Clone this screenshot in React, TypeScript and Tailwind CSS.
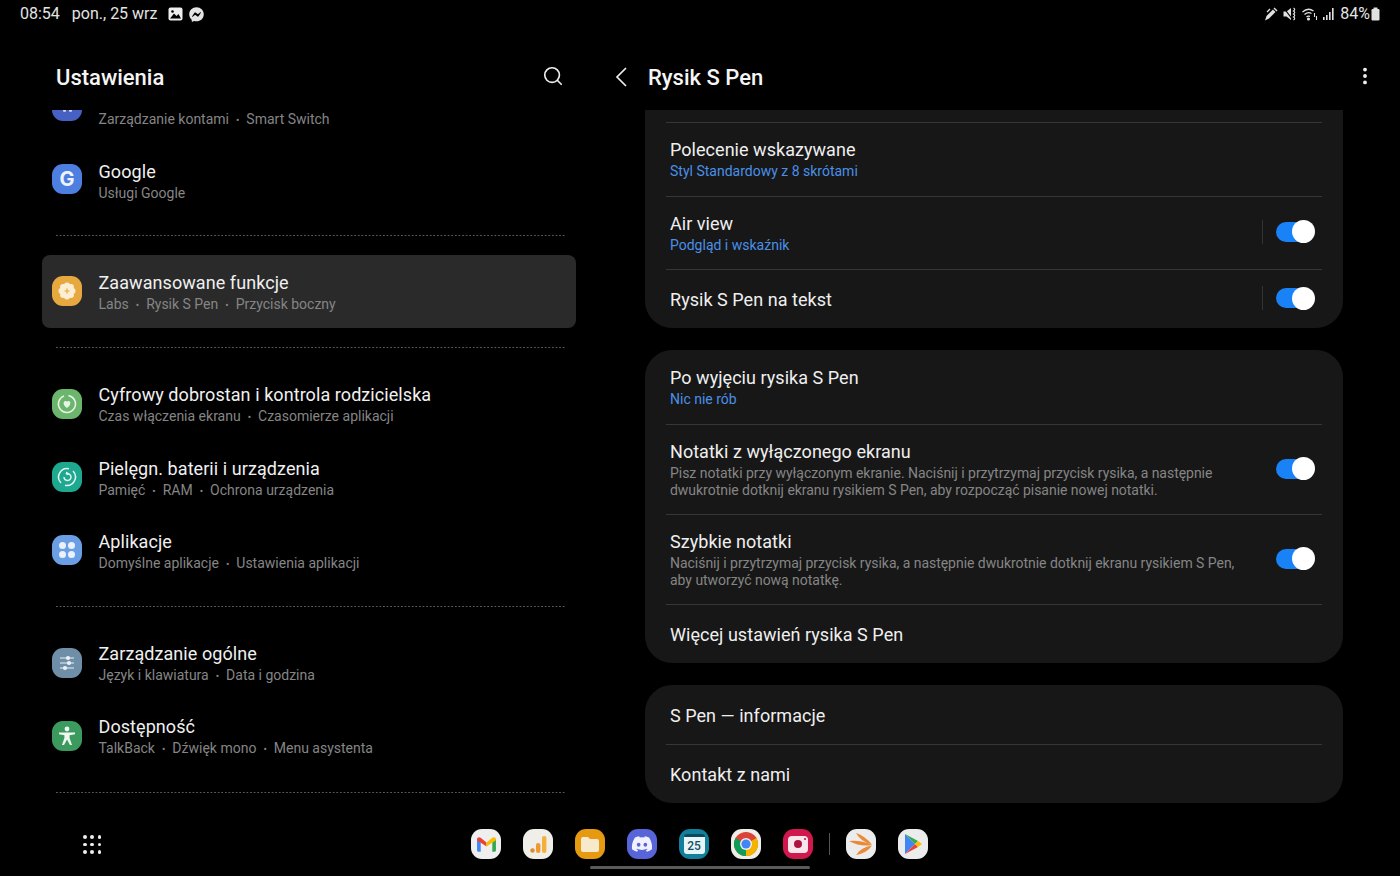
import { ReactNode } from 'react';
import { Search, MoreVertical } from 'lucide-react';
import { FaDiscord, FaFacebookMessenger } from 'react-icons/fa';

function Squircle({ className, children }: { className: string; children: ReactNode }) {
  return (
    <div className={`w-[30px] h-[30px] shrink-0 rounded-[11px] flex items-center justify-center overflow-hidden ${className}`}>
      {children}
    </div>
  );
}

function Sub({ parts, className = 'leading-[20px]' }: { parts: string[]; className?: string }) {
  return (
    <div className={`text-[14px] text-[#858585] whitespace-nowrap ${className}`}>
      {parts.map((p, i) => (
        <span key={p}>
          {i > 0 && <span className="mx-[7px] text-[10px]">•</span>}
          {p}
        </span>
      ))}
    </div>
  );
}

function MenuRow({ icon, title, parts, selected }: { icon: ReactNode; title: string; parts: string[]; selected?: boolean }) {
  return (
    <div className={`h-[73.3px] flex items-center gap-4 pl-[10px] rounded-[8px] ${selected ? 'bg-[#2a2a2a]' : ''}`}>
      {icon}
      <div className="flex flex-col pt-[5px] pl-[0.5px]">
        <div className="text-[18px] leading-[22px] tracking-[0.07px] text-[#f0f0f0] whitespace-nowrap">{title}</div>
        <Sub parts={parts} />
      </div>
    </div>
  );
}

function Dots() {
  return (
    <div className="ml-[14px] mr-[10px] my-[19px] h-px bg-[linear-gradient(to_right,#5a5a5a_1.5px,transparent_1.5px)] bg-[length:3.6px_1px]" />
  );
}

function Toggle({ sep }: { sep?: boolean }) {
  return (
    <div className="flex items-center shrink-0 pb-[2px]">
      {sep && <div className="w-px h-[24px] bg-[#333333] mr-[13px]" />}
      <div className="w-[38px] h-[20px] rounded-full bg-[#1a82f7] flex items-center justify-end">
        <div className="w-[23px] h-[23px] rounded-full bg-white -mr-px" />
      </div>
    </div>
  );
}

function SetRow({ title, blue, desc, toggle, sep, className, last }: { title: string; blue?: string; desc?: string; toggle?: boolean; sep?: boolean; className: string; last?: boolean }) {
  return (
    <div className={`mx-[21px] pl-[4px] pr-[8px] flex items-center justify-between ${last ? '' : 'border-b border-[#363636]'} ${className}`}>
      <div className={`flex flex-col ${desc ? '' : 'pt-[2px]'}`}>
        <div className="text-[18px] leading-[22px] tracking-[0.04px] text-[#efefef] whitespace-nowrap">{title}</div>
        {blue && <div className="text-[14px] leading-[20px] text-[#4a90e8] whitespace-nowrap">{blue}</div>}
        {desc && <div className="text-[14px] leading-[17px] tracking-[-0.03px] text-[#858585] w-[570px] pt-[2px]">{desc}</div>}
      </div>
      {toggle && <Toggle sep={sep} />}
    </div>
  );
}

function StatusIcons() {
  return (
    <div className="flex items-center text-[#e0e0e0]">
      {/* pen */}
      <svg width="14" height="14" viewBox="0 0 14 14" fill="none" stroke="currentColor">
        <path d="M1 13.5 L2.5 9 L9 2.5 L11.5 5 L5 11.5 Z" fill="currentColor" stroke="none" />
        <path d="M10 1 L13 4" strokeWidth="1.4" />
        <path d="M3 5 L6 2" strokeWidth="1.2" />
      </svg>
      {/* mute */}
      <svg width="14" height="14" viewBox="0 0 14 14" fill="currentColor" className="ml-[5px]">
        <path d="M0.5 4.5 H3.5 L8 1 V13 L3.5 9.5 H0.5 Z" />
        <path d="M0.5 0.5 L9.5 12.5" stroke="#000" strokeWidth="1.2" />
        <path d="M10.5 1 q2.4 1.5 0 3 q2.4 1.5 0 3 q2.4 1.5 0 3 q2.4 1.5 0 3" fill="none" stroke="currentColor" strokeWidth="1.2" />
      </svg>
      {/* wifi */}
      <svg width="16" height="14" viewBox="0 0 16 14" fill="none" stroke="currentColor" strokeWidth="1.3" className="ml-[5px]">
        <path d="M0.5 5 Q6 0 11.5 4" />
        <path d="M2.5 7.5 Q6 4.5 9.5 6.5" />
        <path d="M4.5 10 Q6 8.8 8 9.4" />
        <circle cx="6.5" cy="12" r="0.9" fill="currentColor" />
        <path d="M12.5 6 V10 M14.5 9 V13" strokeWidth="1.1" />
      </svg>
      {/* signal */}
      <svg width="12" height="14" viewBox="0 0 12 14" fill="currentColor" className="ml-[5px]">
        <rect x="0" y="10" width="1.6" height="3" />
        <rect x="3" y="8" width="1.6" height="5" />
        <rect x="6" y="5" width="1.6" height="8" />
        <rect x="9" y="1" width="1.6" height="12" />
      </svg>
      <span className="ml-[5px] text-[16px] leading-none text-[#e4e4e4]">84%</span>
      <svg width="9" height="14" viewBox="0 0 9 14" fill="currentColor" className="ml-[1px]">
        <rect x="2.5" y="0.5" width="4" height="2" rx="0.5" />
        <rect x="0.5" y="2" width="8" height="11.5" rx="1.2" />
      </svg>
    </div>
  );
}

const gmail = (
  <svg width="21" height="17" viewBox="0 0 20 16" fill="none">
    <path d="M1 15 V3 L4.5 5 V15 H2.5 Q1 15 1 13.5 Z" fill="#4285f4" />
    <path d="M19 15 V3 L15.5 5 V15 H17.5 Q19 15 19 13.5 Z" fill="#34a853" />
    <path d="M1 3 C1 1 3 0.5 4.5 1.5 L10 6 V10 L1 4 Z" fill="#ea4335" />
    <path d="M19 3 C19 1 17 0.5 15.5 1.5 L10 6 V10 L19 4 Z" fill="#fbbc04" />
  </svg>
);

const chrome = (
  <svg width="26" height="26" viewBox="0 0 26 26">
    <circle cx="13" cy="13" r="12" fill="#db4437" />
    <path d="M13 13 L2.6 7 A12 12 0 0 0 13 25 Z" fill="#0f9d58" />
    <path d="M13 13 L23.4 7 A12 12 0 0 1 13 25 Z" fill="#f4b400" />
    <circle cx="13" cy="13" r="6" fill="#f1f1f1" />
    <circle cx="13" cy="13" r="4.6" fill="#4285f4" />
  </svg>
);

const play = (
  <svg width="20" height="22" viewBox="0 0 20 22">
    <path d="M2 1 L12 11 L2 21 Z" fill="#4285f4" />
    <path d="M2 1 L15 8 L12 11 Z" fill="#34a853" />
    <path d="M2 21 L15 14 L12 11 Z" fill="#ea4335" />
    <path d="M15 8 L19 11 L15 14 L12 11 Z" fill="#fbbc04" />
  </svg>
);

const swift = (
  <svg width="26" height="24" viewBox="0 0 26 24" fill="#e88a38">
    <path d="M8 1 Q17 4 24 12.5 Q13 10 8 1 Z" />
    <path d="M1 9 Q13 8 24 13 Q12 15 1 9 Z" />
    <path d="M8 23 Q13 15 24 13.5 Q19 21 8 23 Z" />
  </svg>
);

export default function App() {
  return (
    <div className="w-[1400px] h-[876px] bg-black flex flex-col overflow-hidden font-['Roboto',sans-serif]">
      {/* status bar */}
      <div className="h-[28px] shrink-0 flex items-center justify-between pl-[20px] pr-[20px] text-[16px] text-[#e4e4e4]">
        <div className="flex items-center">
          <span>08:54</span>
          <span className="ml-[12px]">pon., 25 wrz</span>
          <svg width="15" height="14" viewBox="0 0 15 14" className="ml-[11px]">
            <rect x="0.5" y="0.5" width="14" height="13" rx="2" fill="#eeeeee" />
            <path d="M2 11.5 L6 6.5 L8.5 9 L10.5 7 L13 11.5 Z" fill="#000" />
            <circle cx="4.5" cy="4.5" r="1.3" fill="#000" />
          </svg>
          <FaFacebookMessenger size={15} className="ml-[6px]" />
        </div>
        <StatusIcons />
      </div>

      <div className="flex-1 min-h-0 flex">
        {/* left column */}
        <div className="w-[534px] ml-[42px] flex flex-col">
          <div className="h-[82px] shrink-0 flex items-center justify-between pl-[14px] pr-[2px] pt-[16px]">
            <span className="text-[22px] font-medium text-[#f5f5f5]">Ustawienia</span>
            <Search size={22} strokeWidth={1.8} className="text-[#eeeeee] mr-[10px] -mt-[2px]" />
          </div>
          <div className="flex-1 min-h-0 overflow-hidden">
            {/* scrolled row, cut by the header */}
            <div className="h-[32.5px] flex gap-4 pl-[10px]">
              <div className="h-[11px] overflow-hidden">
                <div className="-mt-[19px]">
                  <Squircle className="bg-[#4660c4]">
                    <div className="flex gap-[3px] mt-[8px]">
                      <div className="w-[3px] h-[4px] rounded-full bg-[#c9d2f0]" />
                      <div className="w-[3px] h-[4px] rounded-full bg-[#c9d2f0]" />
                    </div>
                  </Squircle>
                </div>
              </div>
              <div className="pl-[0.5px]">
                <Sub parts={['Zarządzanie kontami', 'Smart Switch']} className="leading-[18px]" />
              </div>
            </div>
            <MenuRow
              title="Google"
              parts={['Usługi Google']}
              icon={<Squircle className="bg-[#4c7fe0]"><span className="font-['Inter',sans-serif] text-[20px] font-bold text-[#eef3fb] leading-none">G</span></Squircle>}
            />
            <Dots />
            <MenuRow
              selected
              title="Zaawansowane funkcje"
              parts={['Labs', 'Rysik S Pen', 'Przycisk boczny']}
              icon={
                <Squircle className="bg-[#e8a840]">
                  <svg width="20" height="20" viewBox="0 0 20 20">
                    <g fill="#fbeed2">
                      <circle cx="10" cy="4.5" r="3" />
                      <circle cx="10" cy="15.5" r="3" />
                      <circle cx="4.5" cy="10" r="3" />
                      <circle cx="15.5" cy="10" r="3" />
                      <circle cx="6.1" cy="6.1" r="3" />
                      <circle cx="13.9" cy="6.1" r="3" />
                      <circle cx="6.1" cy="13.9" r="3" />
                      <circle cx="13.9" cy="13.9" r="3" />
                      <circle cx="10" cy="10" r="4" />
                    </g>
                    <path d="M10 7.5 V12.5 M7.5 10 H12.5" stroke="#e8a840" strokeWidth="1.2" />
                  </svg>
                </Squircle>
              }
            />
            <Dots />
            <MenuRow
              title="Cyfrowy dobrostan i kontrola rodzicielska"
              parts={['Czas włączenia ekranu', 'Czasomierze aplikacji']}
              icon={
                <Squircle className="bg-[#6bb56c]">
                  <svg width="22" height="22" viewBox="0 0 22 22" fill="none" stroke="#e6f4e6" strokeWidth="1.6">
                    <path d="M12.5 2.6 A8.5 8.5 0 1 1 8 3" />
                    <path d="M11 15 C6 11.5 7.5 8 9.5 8 C10.3 8 11 8.6 11 9 C11 8.6 11.7 8 12.5 8 C14.5 8 16 11.5 11 15 Z" fill="#e6f4e6" stroke="none" />
                  </svg>
                </Squircle>
              }
            />
            <MenuRow
              title="Pielęgn. baterii i urządzenia"
              parts={['Pamięć', 'RAM', 'Ochrona urządzenia']}
              icon={
                <Squircle className="bg-[#1ea88f]">
                  <svg width="22" height="22" viewBox="0 0 22 22" fill="none" stroke="#dff5f0" strokeWidth="1.5">
                    <path d="M5 17 A8.5 8.5 0 0 1 13 2.8" />
                    <path d="M17 5 A8.5 8.5 0 0 1 9 19.2" />
                    <path d="M8 11 A3.5 3.5 0 1 0 10.5 7.7 M10.8 5.8 L10.5 7.7 L12.3 8.6" />
                  </svg>
                </Squircle>
              }
            />
            <MenuRow
              title="Aplikacje"
              parts={['Domyślne aplikacje', 'Ustawienia aplikacji']}
              icon={
                <Squircle className="bg-[#6a9fe6]">
                  <div className="grid grid-cols-2 gap-[2px]">
                    <div className="w-[7px] h-[7px] rounded-full bg-[#eaf1fb]" />
                    <div className="w-[7px] h-[7px] rounded-full bg-[#eaf1fb]" />
                    <div className="w-[7px] h-[7px] rounded-full bg-[#eaf1fb]" />
                    <div className="w-[7px] h-[7px] rounded-full bg-[#eaf1fb]" />
                  </div>
                </Squircle>
              }
            />
            <Dots />
            <MenuRow
              title="Zarządzanie ogólne"
              parts={['Język i klawiatura', 'Data i godzina']}
              icon={
                <Squircle className="bg-[#6f8ea8]">
                  <svg width="20" height="18" viewBox="0 0 20 18" stroke="#eaf0f4" strokeWidth="1.2" fill="#eaf0f4">
                    <path d="M3 4 H17 M3 9 H17 M3 14 H17" />
                    <circle cx="11" cy="4" r="1.5" />
                    <circle cx="12" cy="9" r="1.5" />
                    <circle cx="8" cy="14" r="1.5" />
                  </svg>
                </Squircle>
              }
            />
            <MenuRow
              title="Dostępność"
              parts={['TalkBack', 'Dźwięk mono', 'Menu asystenta']}
              icon={
                <Squircle className="bg-[#3d9a5f]">
                  <svg width="20" height="22" viewBox="0 0 20 22" fill="#f0f8f2">
                    <circle cx="10" cy="4" r="2.4" />
                    <path d="M2 7.5 H18 V9.3 L12.6 10.2 V13 L15 20 H13 L10 14.5 L7 20 H5 L7.4 13 V10.2 L2 9.3 Z" />
                  </svg>
                </Squircle>
              }
            />
            <Dots />
          </div>
        </div>

        {/* right column */}
        <div className="w-[766px] ml-[34px] flex flex-col">
          <div className="h-[82px] shrink-0 flex items-center pt-[16px]">
            <svg width="14" height="22" viewBox="0 0 14 22" fill="none" stroke="#eeeeee" strokeWidth="1.7" className="ml-[4px] -mt-[1px]">
              <path d="M12 2 L3 11 L12 20" />
            </svg>
            <span className="ml-[20px] text-[22px] font-medium text-[#f5f5f5]">Rysik S Pen</span>
            <MoreVertical size={22} strokeWidth={2.2} className="text-[#eeeeee] ml-auto -mt-[2px]" />
          </div>
          <div className="flex-1 min-h-0 overflow-hidden ml-[35px] w-[698px] flex flex-col gap-[22px]">
            <div className="bg-[#171717] rounded-b-[27px] pt-[12px] shrink-0">
              <div className="mx-[21px] border-b border-[#363636]" />
              <SetRow className="h-[73.5px]" title="Polecenie wskazywane" blue="Styl Standardowy z 8 skrótami" />
              <SetRow className="h-[73.5px]" title="Air view" blue="Podgląd i wskaźnik" toggle sep />
              <SetRow className="h-[58px]" title="Rysik S Pen na tekst" toggle sep last />
            </div>
            <div className="bg-[#171717] rounded-[27px] shrink-0">
              <SetRow className="h-[75px]" title="Po wyjęciu rysika S Pen" blue="Nic nie rób" />
              <SetRow
                className="h-[90px]"
                title="Notatki z wyłączonego ekranu"
                desc="Pisz notatki przy wyłączonym ekranie. Naciśnij i przytrzymaj przycisk rysika, a następnie dwukrotnie dotknij ekranu rysikiem S Pen, aby rozpocząć pisanie nowej notatki."
                toggle
              />
              <SetRow
                className="h-[90px]"
                title="Szybkie notatki"
                desc="Naciśnij i przytrzymaj przycisk rysika, a następnie dwukrotnie dotknij ekranu rysikiem S Pen, aby utworzyć nową notatkę."
                toggle
              />
              <SetRow className="h-[58px]" title="Więcej ustawień rysika S Pen" last />
            </div>
            <div className="bg-[#171717] rounded-[27px] shrink-0">
              <SetRow className="h-[60px]" title="S Pen — informacje" />
              <SetRow className="h-[58px]" title="Kontakt z nami" last />
            </div>
          </div>
        </div>
      </div>

      {/* dock */}
      <div className="h-[73px] shrink-0 flex flex-col">
        <div className="flex-1 flex items-center pl-[83px] pt-[19px]">
          <div className="grid grid-cols-3 gap-[4px] w-[18px] mt-[1px]">
            {[0, 1, 2, 3, 4, 5, 6, 7, 8].map((n) => (
              <div key={n} className="w-[3.5px] h-[3.5px] rounded-full bg-[#eeeeee]" />
            ))}
          </div>
          <div className="ml-[370px] flex items-center gap-[22px]">
            <Squircle className="bg-[#efefef]">{gmail}</Squircle>
            <Squircle className="bg-[#efeee9]">
              <svg width="18" height="20" viewBox="0 0 18 20">
                <circle cx="3.5" cy="16.5" r="2.2" fill="#e08a2c" />
                <rect x="7" y="9" width="4.4" height="10" rx="2" fill="#ee9a30" />
                <rect x="13" y="2" width="4.4" height="17" rx="2" fill="#f4b03c" />
              </svg>
            </Squircle>
            <Squircle className="bg-[#e69a12]">
              <svg width="20" height="17" viewBox="0 0 20 17" fill="#f8e9cc">
                <path d="M1 3 Q1 1 3 1 H8 L10 3 H17 Q19 3 19 5 V14 Q19 16 17 16 H3 Q1 16 1 14 Z" />
              </svg>
            </Squircle>
            <Squircle className="bg-[#5865d8]"><FaDiscord size={22} className="text-[#f0f1fc]" /></Squircle>
            <Squircle className="bg-[#12809c]">
              <div className="w-[21px] h-[20px] bg-[#eaf5f7] rounded-[3px] border-t-[3px] border-[#0b4a5c] flex items-center justify-center">
                <span className="text-[12px] font-medium leading-none text-[#12506a]">25</span>
              </div>
            </Squircle>
            <Squircle className="bg-[#efefe8]">{chrome}</Squircle>
            <Squircle className="bg-[#d0184f]">
              <div className="relative w-[20px] h-[17px] bg-[#f9e6ec] rounded-[4px] flex items-center justify-center">
                <div className="w-[8px] h-[8px] rounded-full bg-[#b0123f]" />
                <div className="absolute top-[2px] right-[2px] w-[2px] h-[2px] rounded-full bg-[#b0123f]" />
              </div>
            </Squircle>
            <div className="w-px h-[22px] bg-[#555555] -mx-[6px]" />
            <Squircle className="bg-[#ececec]">{swift}</Squircle>
            <Squircle className="bg-[#ececec]">{play}</Squircle>
          </div>
        </div>
        <div className="w-[220px] h-[3px] mx-auto mb-[7px] rounded-full bg-[#5a5a5a]" />
      </div>
    </div>
  );
}
